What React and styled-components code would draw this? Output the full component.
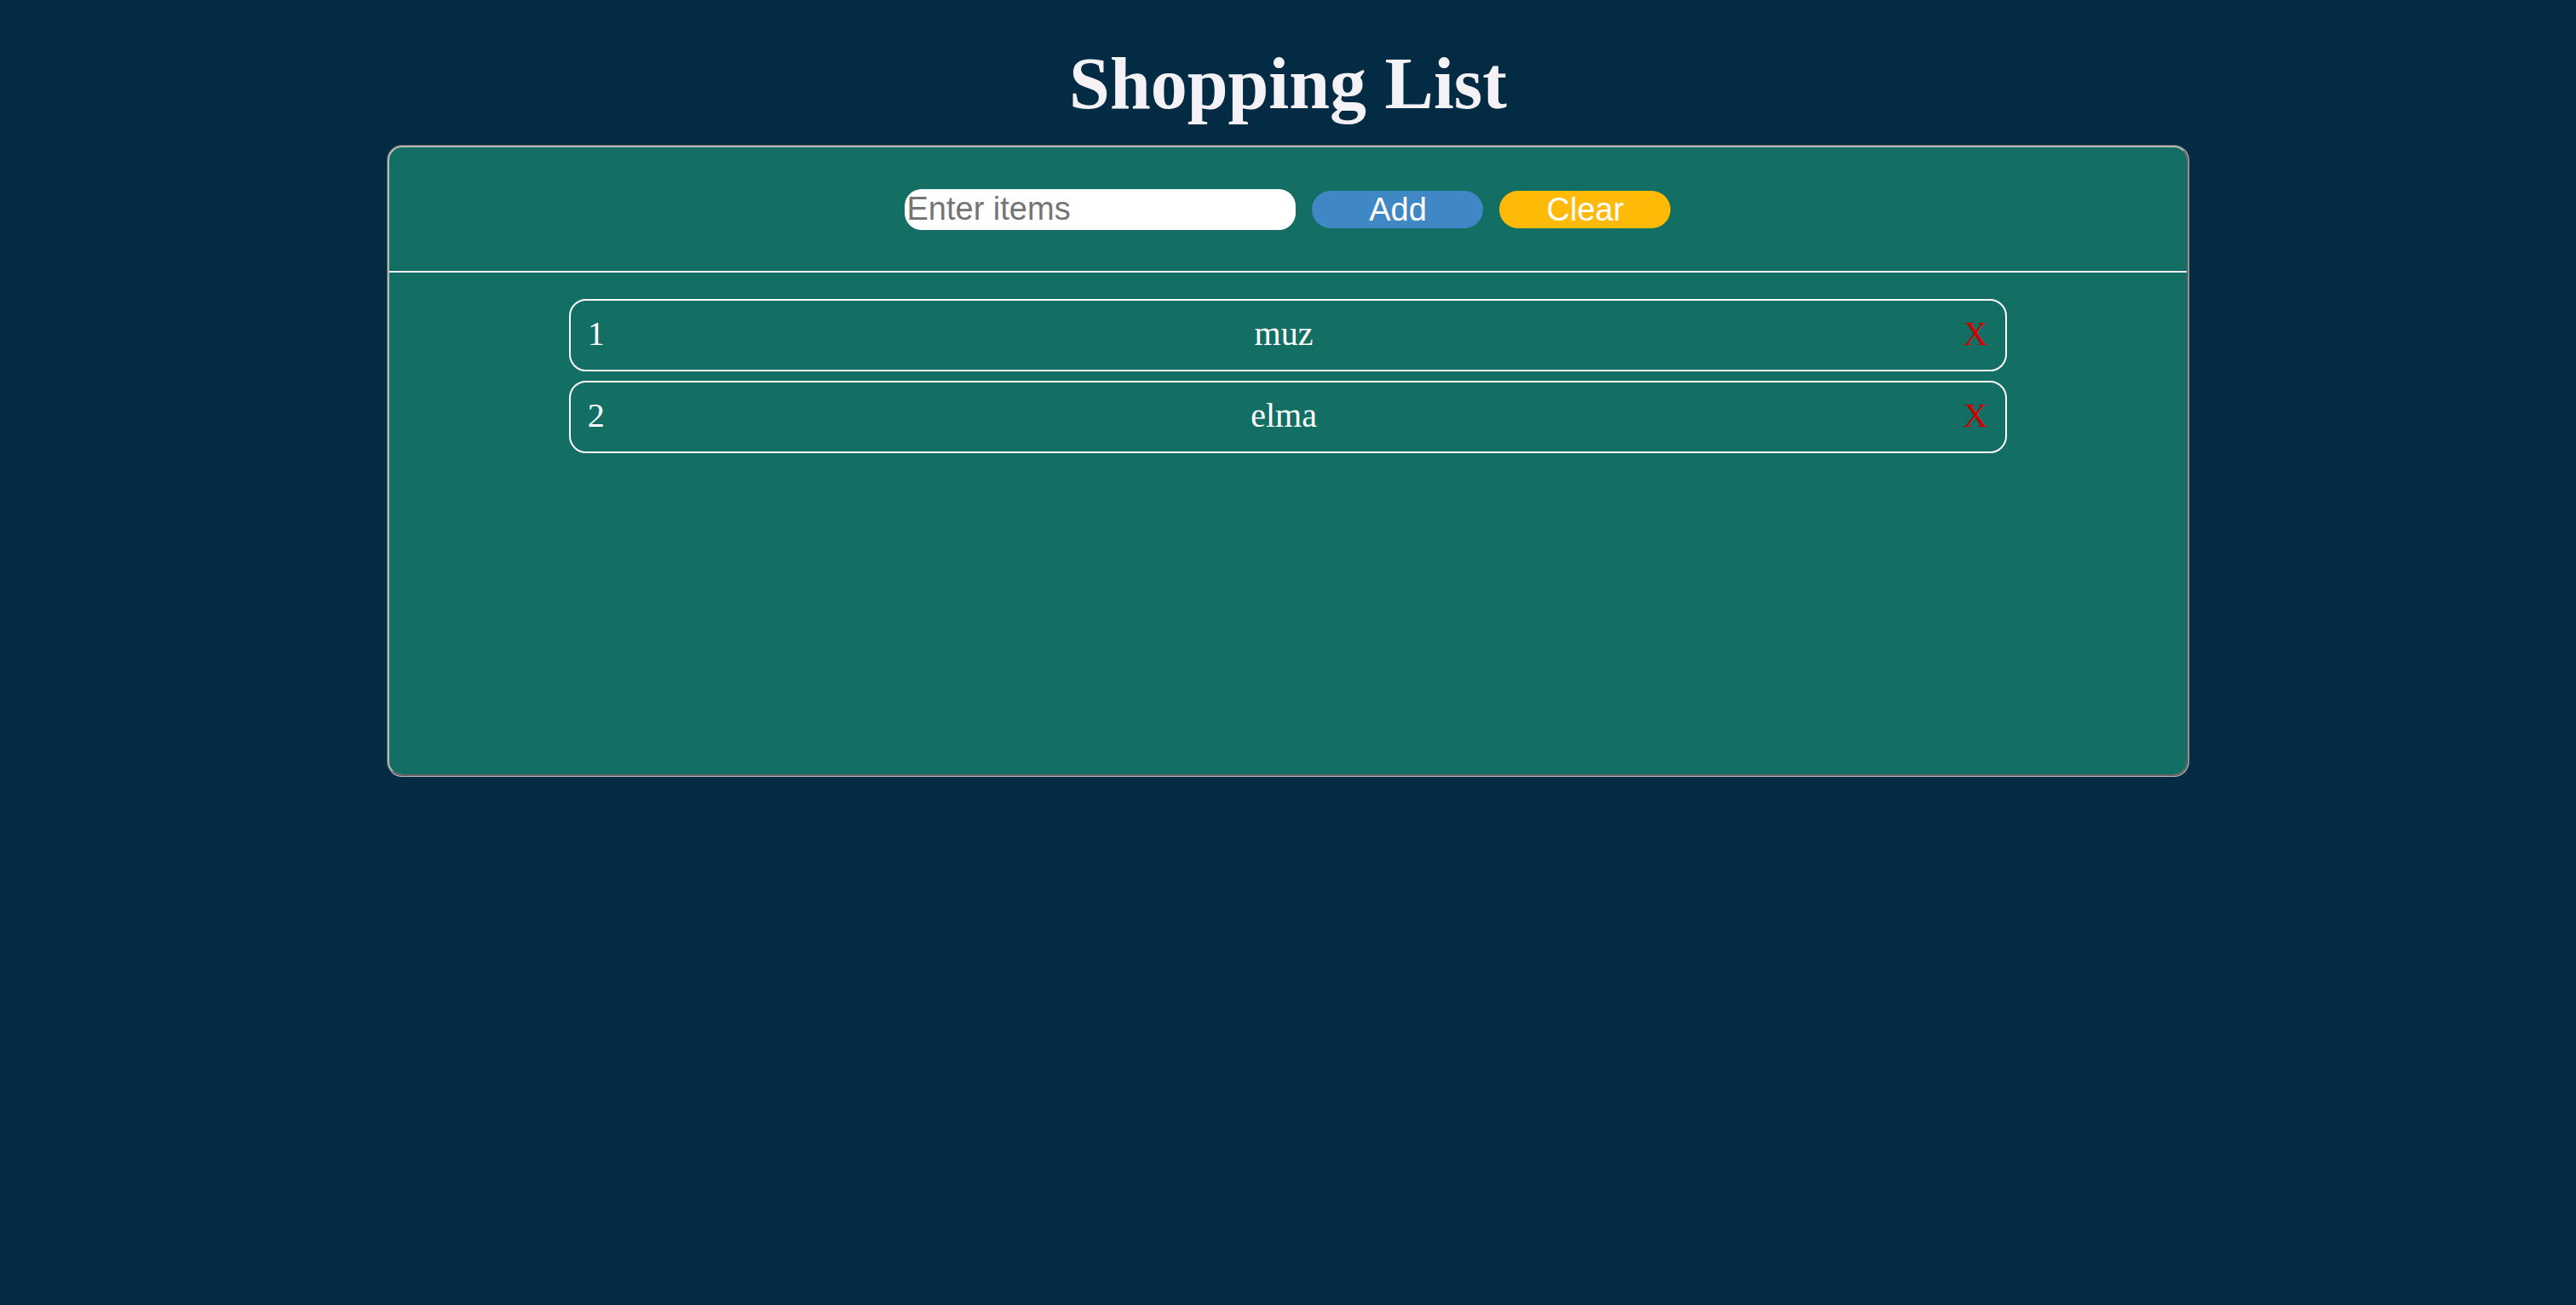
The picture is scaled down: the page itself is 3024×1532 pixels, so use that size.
import React, { useState } from 'react'
import styled, { createGlobalStyle } from 'styled-components'

const GlobalStyle = createGlobalStyle`
  html, body {
    margin: 0;
    padding: 0;
    background-color: #032b43;
    min-height: 100%;
  }
  * {
    box-sizing: border-box;
  }
`

const Page = styled.div`
  min-height: 1532px;
  padding-top: 48px;
  background-color: #032b43;
`

const Title = styled.h1`
  font-family: 'Liberation Serif', 'Times New Roman', serif;
  font-weight: bold;
  font-size: 86px;
  line-height: 100px;
  color: #f4f2f7;
  text-align: center;
  margin: 0 0 22px;
`

const Panel = styled.div`
  width: 70%;
  height: 742px;
  margin: 0 auto;
  background-color: #136f63;
  border: 3px groove #b8b8b8;
  border-radius: 18px;
`

const Header = styled.div`
  display: flex;
  justify-content: center;
  align-items: center;
  gap: 19px;
  height: 147px;
  border-bottom: 2px solid #f0f0f0;
`

const Input = styled.input`
  width: 459px;
  height: 48px;
  padding: 0 2px;
  border: none;
  border-radius: 20px;
  background-color: #ffffff;
  font-family: 'Liberation Sans', Arial, sans-serif;
  font-size: 38px;
  color: #222;
  outline: none;

  &::placeholder {
    color: #757575;
  }
`

const Button = styled.button`
  width: 201px;
  height: 44px;
  padding: 0;
  border: none;
  border-radius: 22px;
  background-color: ${(p) => p.color};
  color: #ffffff;
  font-family: 'Liberation Sans', Arial, sans-serif;
  font-size: 38px;
  line-height: 44px;
  cursor: pointer;
`

const List = styled.ul`
  list-style: none;
  margin: 0 auto;
  padding: 31px 0 0;
  width: 80%;
  display: flex;
  flex-direction: column;
  gap: 11px;
`

const Item = styled.li`
  display: flex;
  justify-content: space-between;
  align-items: center;
  height: 85px;
  padding: 0 21px 4px 20px;
  border: 2px solid #ffffff;
  border-radius: 20px;
  font-family: 'Liberation Serif', 'Times New Roman', serif;
  font-size: 40px;
  color: #ffffff;
`

const Remove = styled.span`
  color: #d00000;
  cursor: pointer;
`

export default function App() {
  const [items, setItems] = useState(['muz', 'elma'])
  const [text, setText] = useState('')

  const add = () => {
    if (text.trim()) {
      setItems([...items, text.trim()])
      setText('')
    }
  }

  return (
    <Page>
      <GlobalStyle />
      <Title>Shopping List</Title>
      <Panel>
        <Header>
          <Input
            placeholder="Enter items"
            value={text}
            onChange={(e) => setText(e.target.value)}
          />
          <Button color="#3f88c5" onClick={add}>Add</Button>
          <Button color="#ffba08" onClick={() => setItems([])}>Clear</Button>
        </Header>
        <List>
          {items.map((item, i) => (
            <Item key={i}>
              <span>{i + 1}</span>
              <span>{item}</span>
              <Remove onClick={() => setItems(items.filter((_, j) => j !== i))}>X</Remove>
            </Item>
          ))}
        </List>
      </Panel>
    </Page>
  )
}
